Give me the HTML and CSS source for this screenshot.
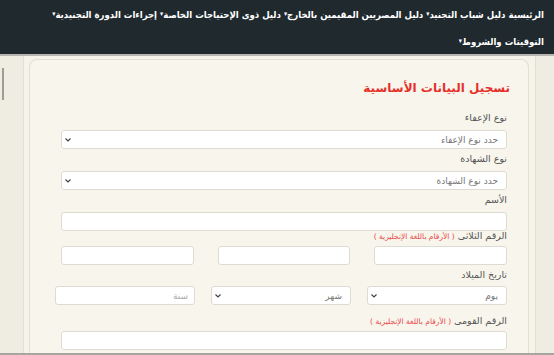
FILE: index.html
```html
<!DOCTYPE html>
<html lang="ar" dir="rtl">
<head>
  <meta charset="UTF-8" />
  <meta name="viewport" content="width=device-width, initial-scale=1.0"/>
  <title>تسجيل البيانات الأساسية</title>
  <link rel="stylesheet" href="styles.css">
</head>
<body>
  <nav class="navbar">
    <a href="#">الرئيسية</a>
    <a href="#">دليل شباب التجنيد<span class="caret">▾</span></a>
    <a href="#">دليل المصريين المقيمين بالخارج<span class="caret">▾</span></a>
    <a href="#">دليل ذوى الإحتياجات الخاصة<span class="caret">▾</span></a>
    <a href="#">إجراءات الدورة التجنيدية<span class="caret">▾</span></a>
    <a href="#">التوقيتات والشروط<span class="caret">▾</span></a>
  </nav>

  <div class="page">
    <div class="side side-right"></div>

    <div class="panel">
      <h2 class="title">تسجيل البيانات الأساسية</h2>

      <div class="field">
        <label>نوع الإعفاء</label>
        <div class="control select">
          <span>حدد نوع الإعفاء</span>
          <svg class="arrow" viewBox="0 0 6 4"><path d="M0.5 0.5 L3 3 L5.5 0.5" fill="none" stroke="#444" stroke-width="1.2"/></svg>
        </div>
      </div>

      <div class="field">
        <label>نوع الشهادة</label>
        <div class="control select">
          <span>حدد نوع الشهادة</span>
          <svg class="arrow" viewBox="0 0 6 4"><path d="M0.5 0.5 L3 3 L5.5 0.5" fill="none" stroke="#444" stroke-width="1.2"/></svg>
        </div>
      </div>

      <div class="field tight">
        <label>الأسم</label>
        <div class="control"></div>
      </div>

      <div class="field">
        <label class="short">الرقم الثلاثى <small class="hint">( الأرقام باللغة الإنجليزية )</small></label>
        <div class="row-3">
          <div class="control"></div>
          <div class="control"></div>
          <div class="control"></div>
        </div>
      </div>

      <div class="field wide">
        <label class="short">تاريخ الميلاد</label>
        <div class="row-date">
          <div class="control select">
            <span>يوم</span>
            <svg class="arrow" viewBox="0 0 6 4"><path d="M0.5 0.5 L3 3 L5.5 0.5" fill="none" stroke="#444" stroke-width="1.2"/></svg>
          </div>
          <div class="control select">
            <span>شهر</span>
            <svg class="arrow" viewBox="0 0 6 4"><path d="M0.5 0.5 L3 3 L5.5 0.5" fill="none" stroke="#444" stroke-width="1.2"/></svg>
          </div>
          <div class="control placeholder">
            <span>سنة</span>
          </div>
        </div>
      </div>

      <div class="field">
        <label class="short">الرقم القومى <small class="hint">( الأرقام باللغة الإنجليزية )</small></label>
        <div class="control"></div>
      </div>
    </div>

    <div class="side side-left">
      <span class="thumb"></span>
    </div>
  </div>
</body>
</html>
```

FILE: styles.css
```css
html, body {
  margin: 0;
  height: 355px;
  overflow: hidden;
}

body {
  font-family: "DejaVu Sans", sans-serif;
  background: #f6f3ea;
  color: #555;
}

.navbar {
  box-sizing: border-box;
  height: 56px;
  background: #1f292e;
  border-bottom: 2px solid #b7b6b0;
  padding: 6px 10px 0 10px;
  display: flex;
  flex-wrap: wrap;
  align-content: flex-start;
  row-gap: 10px;
}

.navbar a {
  color: #fff;
  font-family: "DejaVu Sans Condensed", "DejaVu Sans", sans-serif;
  font-size: 9.5px;
  font-weight: bold;
  line-height: 17px;
  text-decoration: none;
  margin-left: 3px;
}

.caret {
  font-size: 7px;
  vertical-align: 2px;
}

.page {
  display: flex;
  height: 297px;
  border-bottom: 2px solid #a6a5a0;
}

.side {
  background: #efece1;
}

.side-right {
  width: 18px;
  border-left: 1px solid #e2dfd3;
}

.side-left {
  width: 23px;
  border-right: 1px solid #e2dfd3;
  direction: ltr;
}

.thumb {
  display: block;
  width: 2px;
  height: 32px;
  margin: 12px 0 0 2px;
  background: #9d9c97;
}

.panel {
  flex: 1;
  margin: 3px 6px 0 5px;
  background: #f8f5ed;
  border: 1px solid #e3dfd2;
  border-bottom: none;
  border-radius: 8px 8px 0 0;
  padding: 20px 21px 0 31px;
}

.title {
  margin: 0 -3px 15px 0;
  font-size: 12px;
  line-height: 16px;
  color: #e5302a;
}

.field {
  margin-bottom: 3px;
}

.field.tight {
  margin-bottom: -2px;
}

.field.wide {
  margin-left: -8px;
  margin-bottom: 9px;
}

label {
  display: block;
  font-size: 9.5px;
  line-height: 14px;
  margin-bottom: 5px;
  color: #555;
}

label.short {
  margin-bottom: 3px;
}

.field.wide label.short {
  margin-bottom: 4px;
}

.hint {
  font-size: 7.5px;
  line-height: 1;
  color: #e84a4a;
}

.control {
  box-sizing: border-box;
  height: 19px;
  background: #fff;
  border: 1px solid #dedbd2;
  border-radius: 3px;
}

.select, .placeholder {
  display: flex;
  align-items: center;
  justify-content: space-between;
  padding: 0 8px 0 3px;
  font-size: 9px;
  color: #777;
}

.placeholder {
  padding-right: 6px;
  color: #aaa;
}

.arrow {
  width: 6px;
  height: 4px;
}

.row-3 {
  display: grid;
  grid-template-columns: repeat(3, 1fr);
  gap: 24px;
}

.row-date {
  display: grid;
  grid-template-columns: repeat(3, 140px);
  gap: 16px;
}
```
